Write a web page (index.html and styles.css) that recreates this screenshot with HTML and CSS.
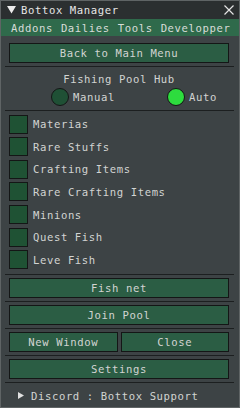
FILE: index.html
```html
<!DOCTYPE html>
<html lang="en">
<head>
    <meta charset="UTF-8">
    <title>Bottox Manager</title>
    <link rel="stylesheet" href="styles.css">
</head>
<body>
    <div class="window">
        <div class="titlebar">
            <svg class="collapse" width="9" height="8" viewBox="0 0 9 8"><polygon points="0,0 9,0 4.5,7.5" fill="#ececec"/></svg>
            <span class="title">Bottox Manager</span>
            <svg class="close-x" width="10" height="10" viewBox="0 0 10 10"><path d="M0.5 0.5 L9.5 9.5 M9.5 0.5 L0.5 9.5" stroke="#e4e4e4" stroke-width="1.2"/></svg>
        </div>

        <div class="menubar">
            <span>Addons</span>
            <span>Dailies</span>
            <span>Tools</span>
            <span>Developper</span>
        </div>

        <div class="content">
            <button class="btn">Back to Main Menu</button>
            <div class="sep"></div>

            <div class="hub-title">Fishing Pool Hub</div>
            <div class="radios">
                <label class="radio"><span class="dot"></span>Manual</label>
                <label class="radio on"><span class="dot"></span>Auto</label>
            </div>
            <div class="sep"></div>

            <div class="checks">
                <div class="check"><span class="box"></span>Materias</div>
                <div class="check"><span class="box"></span>Rare Stuffs</div>
                <div class="check"><span class="box"></span>Crafting Items</div>
                <div class="check"><span class="box"></span>Rare Crafting Items</div>
                <div class="check"><span class="box"></span>Minions</div>
                <div class="check"><span class="box"></span>Quest Fish</div>
                <div class="check"><span class="box"></span>Leve Fish</div>
            </div>
            <div class="sep sep-list"></div>

            <button class="btn">Fish net</button>
            <div class="sep"></div>
            <button class="btn">Join Pool</button>
            <div class="sep"></div>
            <div class="pair">
                <button class="btn">New Window</button>
                <button class="btn">Close</button>
            </div>
            <div class="sep"></div>
            <button class="btn">Settings</button>
            <div class="sep"></div>

            <div class="tree">
                <svg width="6" height="7" viewBox="0 0 6 7"><polygon points="0,0 6,3.5 0,7" fill="#e0e0e0"/></svg>
                <span>Discord : Bottox Support</span>
            </div>
        </div>
    </div>
</body>
</html>
```

FILE: styles.css
```css
body {
    margin: 0;
    background: #2a2d2e;
    font-family: 'DejaVu Sans Mono', 'Liberation Mono', monospace;
    font-size: 10.6px;
    letter-spacing: 0.6px;
    color: #d2d4d2;
}

.window {
    width: 240px;
    height: 408px;
    box-sizing: border-box;
    border: 1px solid #5f6465;
    background-color: #3d4345;
    display: flex;
    flex-direction: column;
    overflow: hidden;
}

.titlebar {
    height: 18px;
    background-color: #2b2f30;
    display: flex;
    align-items: center;
    padding: 0 5px 0 6px;
    color: #e6e6e6;
}

.titlebar .title {
    flex: 1;
    margin-left: 5px;
}

.menubar {
    height: 17px;
    background-color: #2f6a4b;
    display: flex;
    align-items: center;
    gap: 8px;
    padding-left: 10px;
    color: #d8dcd8;
}

.content {
    padding: 7px 10px 0 8px;
}

.btn {
    display: block;
    width: 100%;
    height: 20px;
    box-sizing: border-box;
    border: 1px solid #141616;
    background-color: #2b5d44;
    color: #d2d4d2;
    font: inherit;
    letter-spacing: inherit;
    padding: 0;
}

.sep {
    height: 1px;
    background-color: #1c1f20;
    margin: 3px -5px 3px -4px;
}

.hub-title {
    text-align: center;
    line-height: 14px;
    margin-top: 5px;
}

.radios {
    display: flex;
    justify-content: space-between;
    margin: 2px 0 4px;
    padding: 0 12px 0 42px;
}

.radio {
    display: flex;
    align-items: center;
    gap: 4px;
}

.radio .dot {
    width: 16px;
    height: 16px;
    border-radius: 50%;
    border: 1px solid #141616;
    background-color: #1f5035;
}

.radio.on .dot {
    background-color: #2ddc3e;
}

.checks {
    display: flex;
    flex-direction: column;
    gap: 4.67px;
    margin-top: 4px;
}

.check {
    display: flex;
    align-items: center;
    gap: 5px;
    height: 18px;
}

.check .box {
    width: 17px;
    height: 17px;
    border: 1px solid #141616;
    background-color: #1f5234;
}

.sep-list {
    margin-top: 5px;
}

.pair {
    display: flex;
    gap: 3px;
}

.tree {
    display: flex;
    align-items: center;
    gap: 7px;
    padding: 4px 0 0 9px;
}
```
